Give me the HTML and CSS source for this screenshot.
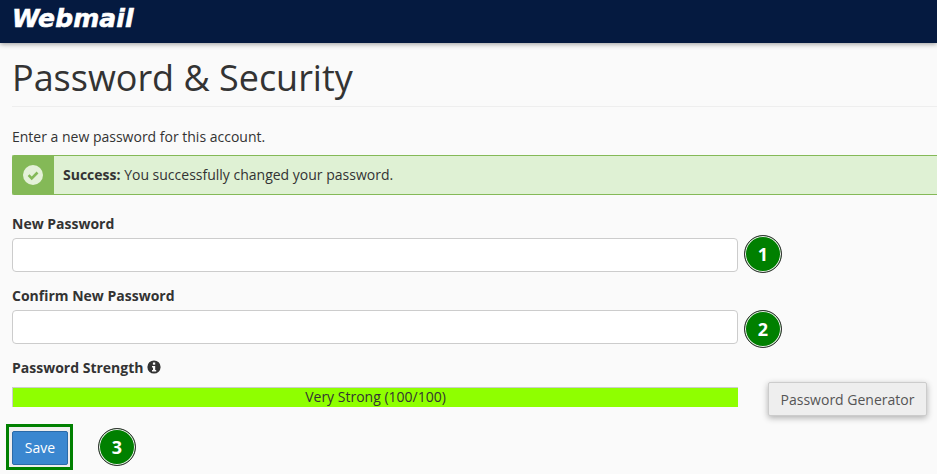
FILE: index.html
```html
<!DOCTYPE html>
<html lang="en">
<head>
<meta charset="utf-8">
<title>Password &amp; Security</title>
<link rel="stylesheet" href="styles.css">
</head>
<body>
<header class="topbar"><span class="logo">Webmail</span></header>
<main class="content">
  <h1 class="title">Password &amp; Security</h1>
  <p class="intro">Enter a new password for this account.</p>
  <div class="alert">
    <div class="alert-icon">
      <svg width="22" height="22" viewBox="0 0 22 22"><circle cx="10" cy="11" r="10" fill="#e4f1d8"/><path d="M5.6 11.2l3.1 3.1 5.8-5.8" fill="none" stroke="#84b957" stroke-width="2.6"/></svg>
    </div>
    <div class="alert-text"><strong>Success:</strong> You successfully changed your password.</div>
  </div>
  <label class="label label-first">New Password</label>
  <div class="field-row">
    <input class="input" type="password">
    <span class="step step-up">1</span>
  </div>
  <label class="label label-second">Confirm New Password</label>
  <div class="field-row">
    <input class="input" type="password">
    <span class="step step-down">2</span>
  </div>
  <label class="label label-third">Password Strength
    <svg class="info" width="14" height="14" viewBox="0 0 14 14"><circle cx="7" cy="7" r="6.6" fill="#333"/><rect x="5.9" y="2.5" width="2.3" height="2.2" fill="#fafafa"/><path d="M5 6h3.2v4h1v1.4H5V10h1V7.4H5z" fill="#fafafa"/></svg>
  </label>
  <div class="strength-row">
    <div class="meter">Very Strong (100/100)</div>
    <button class="generator" type="button">Password Generator</button>
  </div>
  <div class="save-row">
    <div class="save-frame"><button class="save" type="button">Save</button></div>
    <span class="step">3</span>
  </div>
</main>
</body>
</html>
```
FILE: styles.css
```css
* { box-sizing: border-box; }
html, body { margin: 0; height: 100%; overflow: hidden; }
body { background: #fafafa; color: #333; font-family: "Open Sans", sans-serif; font-size: 14px; }
.topbar { height: 43px; background: #051a40; box-shadow: 0 1px 5px rgba(0,0,0,.4); padding-left: 12px; display: flex; align-items: center; }
.logo { color: #fff; font-family: "DejaVu Sans", sans-serif; font-weight: 700; font-style: italic; font-size: 25px; letter-spacing: .1px; -webkit-text-stroke: .6px #fff; margin-top: -7px; }
.content { padding: 0 0 0 12px; }
.title { margin: 0; height: 64px; padding-top: 10px; border-bottom: 1px solid #eee; font-size: 36px; line-height: 49px; font-weight: 400; letter-spacing: -.02px; color: #333; }
.intro { margin: 0; padding-top: 20px; line-height: 19px; }
.alert { display: flex; height: 40px; margin-top: 9px; border: 1px solid #84b957; border-right: 0; border-radius: 2px 0 0 2px; background: #dff1d4; }
.alert-icon { width: 41px; background: #84b957; display: flex; align-items: center; justify-content: center; }
.alert-text { padding-left: 9px; line-height: 37px; }
.label { display: block; font-weight: 700; line-height: 19px; }
.label-first { margin-top: 19px; }
.label-second { margin-top: 14px; }
.label-third { margin-top: 14px; }
.info { vertical-align: -1px; }
.field-row { display: flex; align-items: center; margin-top: 5px; height: 34px; }
.input { width: 726px; height: 34px; border: 1px solid #ccc; border-radius: 4px; background: #fff; padding: 6px 12px; }
.step { flex: none; width: 38px; height: 38px; margin-left: 6px; border-radius: 50%; background: #008000; border: 1px solid #333; box-shadow: inset 0 0 0 1px #f0f0f0; color: #fff; font-weight: 700; font-size: 18px; display: flex; align-items: center; justify-content: center; }
.step-up { margin-top: -2px; }
.step-down { margin-top: 4px; }
.strength-row { display: flex; align-items: flex-start; height: 34px; margin-top: 5px; }
.meter { width: 726px; height: 20px; margin-top: 5px; background: #8fff00; border: 1px solid #ccc; border-width: 1px 0 0 1px; text-align: center; line-height: 18px; color: #333; }
.generator { margin-left: 30px; width: 159px; height: 34px; border: 1px solid #ccc; border-radius: 2px; background: #eee; box-shadow: 0 2px 6px rgba(0,0,0,.3); color: #555; font: 14px "Open Sans", sans-serif; padding: 0; }
.save-row { display: flex; align-items: center; margin: 8px 0 0 -6px; }
.save-frame { width: 67px; height: 46px; border: 3px solid #008000; padding: 4px 3px 3px; background: #eee; }
.save { display: block; width: 56px; height: 34px; background: #3a87d0; border: 1px solid #2a6aa8; border-radius: 2px; color: #fff; font: 14px "Open Sans", sans-serif; padding: 0 0 2px; }
.save-row .step { margin-left: 25px; }
```
